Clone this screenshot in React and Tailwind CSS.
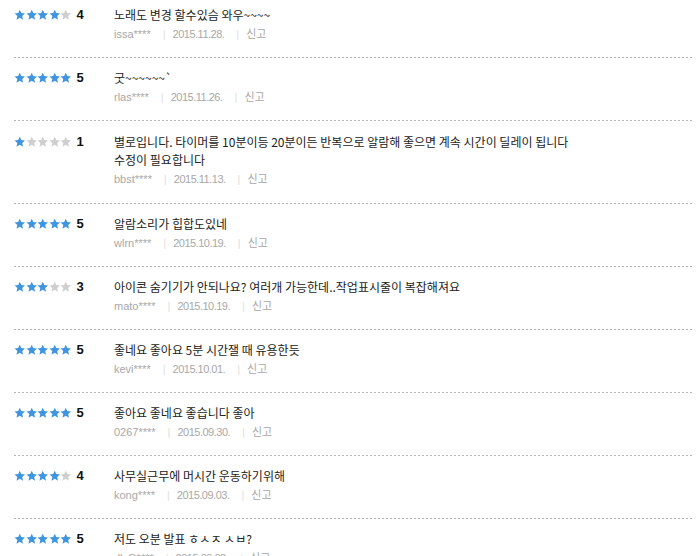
const reviews = [
  { rate: 4, text: ["노래도 변경 할수있슴 와우~~~~"], user: "issa****", date: "2015.11.28." },
  { rate: 5, text: ["굿~~~~~~`"], user: "rlas****", date: "2015.11.26." },
  {
    rate: 1,
    text: [
      "별로입니다. 타이머를 10분이등 20분이든 반복으로 알람해 좋으면 계속 시간이 딜레이 됩니다",
      "수정이 필요합니다",
    ],
    user: "bbst****",
    date: "2015.11.13.",
  },
  { rate: 5, text: ["알람소리가 힙합도있네"], user: "wlrn****", date: "2015.10.19." },
  { rate: 3, text: ["아이콘 숨기기가 안되나요? 여러개 가능한데..작업표시줄이 복잡해져요"], user: "mato****", date: "2015.10.19." },
  { rate: 5, text: ["좋네요 좋아요 5분 시간잴 때 유용한듯"], user: "kevi****", date: "2015.10.01." },
  { rate: 5, text: ["좋아요 좋네요 좋습니다 좋아"], user: "0267****", date: "2015.09.30." },
  { rate: 4, text: ["사무실근무에 머시간 운동하기위해"], user: "kong****", date: "2015.09.03." },
  { rate: 5, text: ["저도 오분 발표 ㅎㅅㅈ ㅅㅂ?"], user: "dlsQ****", date: "2015.09.02." },
];

function Star({ on }) {
  return (
    <svg width="11.5" height="11.5" viewBox="0 0 24 24" className="shrink-0">
      <path
        d="M12 1.5l3.2 7.1 7.7.8-5.8 5.2 1.7 7.6L12 18.3l-6.8 3.9 1.7-7.6-5.8-5.2 7.7-.8z"
        fill={on ? "#3f95e0" : "#cfcfcf"}
      />
    </svg>
  );
}

function Row({ r }) {
  const multi = r.text.length > 1;
  return (
    <li>
      <div className={multi ? "flex pt-[12px] pb-[16px]" : "flex pt-[11px] pb-[15px]"}>
        <div className="w-[100px] shrink-0 flex items-center h-[18px]">
          <div className="flex">
            {[1, 2, 3, 4, 5].map((i) => (
              <Star key={i} on={i <= r.rate} />
            ))}
          </div>
          <span className="ml-[5px] font-bold text-[13px] text-[#111] font-['Liberation_Sans',sans-serif]">
            {r.rate}
          </span>
        </div>
        <div>
          {r.text.map((t, i) => (
            <p key={i} className="text-[12px] leading-[18px] text-[#222]">
              {t}
            </p>
          ))}
          <p className="mt-[2px] text-[11px] leading-[16px] text-[#a8a8a8] font-['Liberation_Sans','Noto_Sans_CJK_KR',sans-serif]">
            {r.user}
            <span className="ml-[12px] mr-[7px] text-[#e0e0e0]">|</span>
            <span className="tracking-[-0.5px]">{r.date}</span>
            <span className="ml-[12px] mr-[7px] text-[#e0e0e0]">|</span>
            신고
          </p>
        </div>
      </div>
      <div className="h-px bg-[linear-gradient(to_right,#b5b5b5_50%,transparent_0)] bg-[length:4px_1px] bg-repeat-x" />
    </li>
  );
}

export default function App() {
  return (
    <div className="w-[700px] h-[556px] overflow-hidden bg-white font-['Noto_Sans_CJK_KR',sans-serif]">
      <ul className="ml-[14px] mr-[7px] -mt-[5px]">
        {reviews.map((r, i) => (
          <Row key={i} r={r} />
        ))}
      </ul>
    </div>
  );
}
